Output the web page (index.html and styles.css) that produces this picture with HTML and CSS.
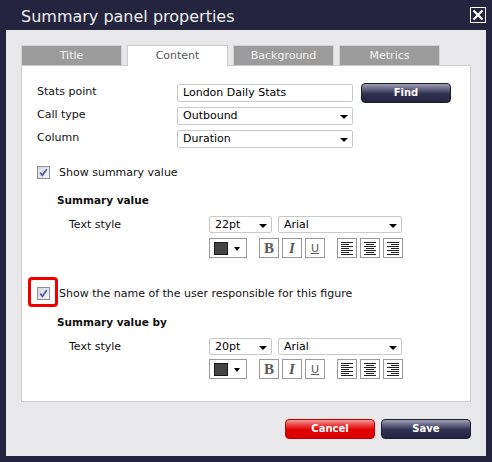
FILE: index.html
```html
<!DOCTYPE html>
<html>
<head>
<meta charset="utf-8">
<link rel="stylesheet" href="styles.css">
</head>
<body>
<div class="window">
  <div class="titlebar">
    <span class="title">Summary panel properties</span>
    <span class="close"><svg width="14" height="14" viewBox="0 0 14 14"><path d="M2.5 2.5 L11.5 11.5 M11.5 2.5 L2.5 11.5" stroke="#fff" stroke-width="2.2" fill="none"/></svg></span>
  </div>
  <div class="dialog">
    <div class="tabs">
      <div class="tab">Title</div>
      <div class="tab active">Content</div>
      <div class="tab">Background</div>
      <div class="tab">Metrics</div>
    </div>
    <div class="panel">
      <div class="form">
        <div class="label">Stats point</div>
        <div class="input">London Daily Stats</div>
        <div class="btn navy find">Find</div>
        <div class="label">Call type</div>
        <div class="select">Outbound<span class="caret"></span></div>
        <div></div>
        <div class="label">Column</div>
        <div class="select">Duration<span class="caret"></span></div>
        <div></div>
      </div>

      <div class="check-row first">
        <span class="check"><svg width="11" height="11" viewBox="0 0 11 11"><path d="M2.2 5.6 L4.4 8.3 L8.8 2.2" stroke="#4b5ea3" stroke-width="1.7" fill="none"/></svg></span>
        <span>Show summary value</span>
      </div>
      <div class="sub-heading">Summary value</div>
      <div class="style-row">
        <div class="style-label">Text style</div>
        <div class="controls">
          <div class="select size">22pt<span class="caret"></span></div>
          <div class="select font">Arial<span class="caret"></span></div>
        </div>
      </div>
      <div class="format-row">
        <div class="colorbtn"><span class="swatch"></span><span class="caret"></span></div>
        <div class="fmt-group">
          <div class="fbtn bold">B</div>
          <div class="fbtn italic">I</div>
          <div class="fbtn under">U</div>
        </div>
        <div class="fmt-group">
          <div class="fbtn"><svg width="12" height="13" viewBox="0 0 12 13"><g fill="#222"><rect x="0" y="0" width="12" height="1"/><rect x="0" y="2" width="8" height="1"/><rect x="0" y="4" width="12" height="1"/><rect x="0" y="6" width="8" height="1"/><rect x="0" y="8" width="12" height="1"/><rect x="0" y="10" width="8" height="1"/><rect x="0" y="12" width="12" height="1"/></g></svg></div>
          <div class="fbtn"><svg width="12" height="13" viewBox="0 0 12 13"><g fill="#222"><rect x="0" y="0" width="12" height="1"/><rect x="2" y="2" width="8" height="1"/><rect x="0" y="4" width="12" height="1"/><rect x="2" y="6" width="8" height="1"/><rect x="0" y="8" width="12" height="1"/><rect x="2" y="10" width="8" height="1"/><rect x="0" y="12" width="12" height="1"/></g></svg></div>
          <div class="fbtn"><svg width="12" height="13" viewBox="0 0 12 13"><g fill="#222"><rect x="0" y="0" width="12" height="1"/><rect x="4" y="2" width="8" height="1"/><rect x="0" y="4" width="12" height="1"/><rect x="4" y="6" width="8" height="1"/><rect x="0" y="8" width="12" height="1"/><rect x="4" y="10" width="8" height="1"/><rect x="0" y="12" width="12" height="1"/></g></svg></div>
        </div>
      </div>

      <div class="check-row second">
        <span class="check highlight"><svg width="11" height="11" viewBox="0 0 11 11"><path d="M2.2 5.6 L4.4 8.3 L8.8 2.2" stroke="#4b5ea3" stroke-width="1.7" fill="none"/></svg></span>
        <span>Show the name of the user responsible for this figure</span>
      </div>
      <div class="sub-heading second">Summary value by</div>
      <div class="style-row">
        <div class="style-label">Text style</div>
        <div class="controls">
          <div class="select size">20pt<span class="caret"></span></div>
          <div class="select font">Arial<span class="caret"></span></div>
        </div>
      </div>
      <div class="format-row tight">
        <div class="colorbtn"><span class="swatch"></span><span class="caret"></span></div>
        <div class="fmt-group">
          <div class="fbtn bold">B</div>
          <div class="fbtn italic">I</div>
          <div class="fbtn under">U</div>
        </div>
        <div class="fmt-group">
          <div class="fbtn"><svg width="12" height="13" viewBox="0 0 12 13"><g fill="#222"><rect x="0" y="0" width="12" height="1"/><rect x="0" y="2" width="8" height="1"/><rect x="0" y="4" width="12" height="1"/><rect x="0" y="6" width="8" height="1"/><rect x="0" y="8" width="12" height="1"/><rect x="0" y="10" width="8" height="1"/><rect x="0" y="12" width="12" height="1"/></g></svg></div>
          <div class="fbtn"><svg width="12" height="13" viewBox="0 0 12 13"><g fill="#222"><rect x="0" y="0" width="12" height="1"/><rect x="2" y="2" width="8" height="1"/><rect x="0" y="4" width="12" height="1"/><rect x="2" y="6" width="8" height="1"/><rect x="0" y="8" width="12" height="1"/><rect x="2" y="10" width="8" height="1"/><rect x="0" y="12" width="12" height="1"/></g></svg></div>
          <div class="fbtn"><svg width="12" height="13" viewBox="0 0 12 13"><g fill="#222"><rect x="0" y="0" width="12" height="1"/><rect x="4" y="2" width="8" height="1"/><rect x="0" y="4" width="12" height="1"/><rect x="4" y="6" width="8" height="1"/><rect x="0" y="8" width="12" height="1"/><rect x="4" y="10" width="8" height="1"/><rect x="0" y="12" width="12" height="1"/></g></svg></div>
        </div>
      </div>
    </div>
    <div class="footer">
      <div class="btn red">Cancel</div>
      <div class="btn navy">Save</div>
    </div>
  </div>
</div>
</body>
</html>
```

FILE: styles.css
```css
*, *::before, *::after { box-sizing: border-box; }
html, body { margin: 0; padding: 0; }
body {
  background: #25243f;
  font-family: "DejaVu Sans", Verdana, sans-serif;
  font-size: 11px;
  color: #111;
}
.window { width: 492px; height: 462px; background: #25243f; }
.titlebar {
  height: 30px;
  display: flex;
  justify-content: space-between;
  align-items: flex-start;
}
.title {
  color: #eeeeee;
  font-size: 16px;
  line-height: 18px;
  padding: 8px 0 0 21px;
}
.close {
  width: 16px;
  height: 16px;
  margin: 7px 6px 0 0;
  border: 1px solid #ffffff;
  display: flex;
  align-items: center;
  justify-content: center;
}
.close svg { display: block; }
.dialog {
  margin: 0 6px;
  height: 426px;
  background: #e8e8ea;
  padding: 15px 15px 0 15px;
}
.tabs {
  display: flex;
  gap: 5px;
  height: 20px;
  align-items: flex-start;
}
.tab {
  width: 101px;
  height: 20px;
  background: #9b9b9b;
  border: 1px solid #d2d2d2;
  border-bottom: none;
  color: #f2f2f2;
  text-align: center;
  line-height: 20px;
}
.tab.active {
  background: #ffffff;
  color: #555555;
  border-color: #cccccc;
  height: 21px;
  position: relative;
  z-index: 1;
}
.panel {
  height: 337px;
  background: #ffffff;
  border: 1px solid #cccccc;
  padding: 0 0 0 15px;
}
.form {
  margin-top: 18px;
  display: grid;
  grid-template-columns: 140px 176px 98px;
  grid-template-rows: 18px 18px 18px;
  row-gap: 5px;
  align-items: start;
}
.label { line-height: 15px; }
.input, .select {
  height: 18px;
  border: 1px solid #c9c9c9;
  border-radius: 2px;
  background: #fff;
  color: #000;
  padding: 0 4px 0 5px;
  line-height: 16px;
  display: flex;
  align-items: center;
  justify-content: space-between;
}
.caret {
  width: 0;
  height: 0;
  border-left: 4px solid transparent;
  border-right: 4px solid transparent;
  border-top: 4px solid #000;
  margin-top: 2px;
}
.btn {
  width: 90px;
  height: 20px;
  border-radius: 4px;
  color: #ffffff;
  font-weight: bold;
  font-size: 10px;
  text-align: center;
  line-height: 18px;
}
.navy {
  background: linear-gradient(#a0a0b4 0%, #6a6a88 25%, #303050 55%, #24243f 100%);
  border: 1px solid #1c1c33;
}
.red {
  background: linear-gradient(#f39a9a 0%, #ec4a4a 25%, #e20000 55%, #dc0000 100%);
  border: 1px solid #b80000;
}
.find { margin: -1px 0 0 8px; }
.check-row {
  display: flex;
  align-items: center;
  gap: 9px;
  height: 13px;
  line-height: 13px;
}
.check-row.first { margin-top: 18px; }
.check-row.second { margin-top: 29px; }
.check {
  width: 13px;
  height: 13px;
  border: 1px solid #8f8f99;
  background: linear-gradient(135deg, #d8d8e0, #f4f4f8);
  display: flex;
  align-items: center;
  justify-content: center;
  position: relative;
}
.check svg { display: block; }
.check.highlight::after {
  content: "";
  position: absolute;
  left: -10px;
  top: -11px;
  width: 30px;
  height: 30px;
  border: 3px solid #ee0000;
  border-radius: 4px;
}
.sub-heading {
  margin: 14px 0 0 20px;
  font-weight: bold;
  font-size: 10.5px;
  line-height: 14px;
  color: #111;
}
.sub-heading.second { margin-top: 15px; }
.style-row {
  margin-top: 9px;
  display: flex;
  align-items: center;
  padding-left: 32px;
}
.style-label { width: 140px; }
.controls { display: flex; gap: 6px; }
.select.size { width: 63px; height: 17px; }
.select.font { width: 124px; height: 17px; }
.format-row {
  margin-top: 5px;
  margin-left: 172px;
  display: flex;
  gap: 12px;
}
.format-row.tight { margin-top: 4px; }
.colorbtn {
  width: 38px;
  height: 20px;
  border: 1px solid #9a9a9a;
  background: #fff;
  display: flex;
  align-items: center;
  padding-left: 4px;
  gap: 6px;
}
.swatch {
  width: 14px;
  height: 13px;
  background: #444444;
  border: 1px solid #1a1a1a;
}
.colorbtn .caret { border-left-width: 3.5px; border-right-width: 3.5px; margin-top: 1px; }
.fmt-group { display: flex; gap: 3px; }
.fbtn {
  width: 20px;
  height: 20px;
  border: 1px solid #9a9a9a;
  background: #fff;
  display: flex;
  align-items: center;
  justify-content: center;
  color: #5a5a5a;
}
.fbtn svg { display: block; }
.fbtn.bold {
  font-family: "Liberation Serif", serif;
  font-weight: bold;
  font-size: 15px;
}
.fbtn.italic {
  font-family: "Liberation Serif", serif;
  font-weight: bold;
  font-style: italic;
  font-size: 15px;
}
.fbtn.under {
  font-family: "DejaVu Sans", sans-serif;
  font-size: 11px;
  text-decoration: underline;
}
.footer {
  margin-top: 17px;
  display: flex;
  justify-content: flex-end;
  gap: 6px;
}
```
